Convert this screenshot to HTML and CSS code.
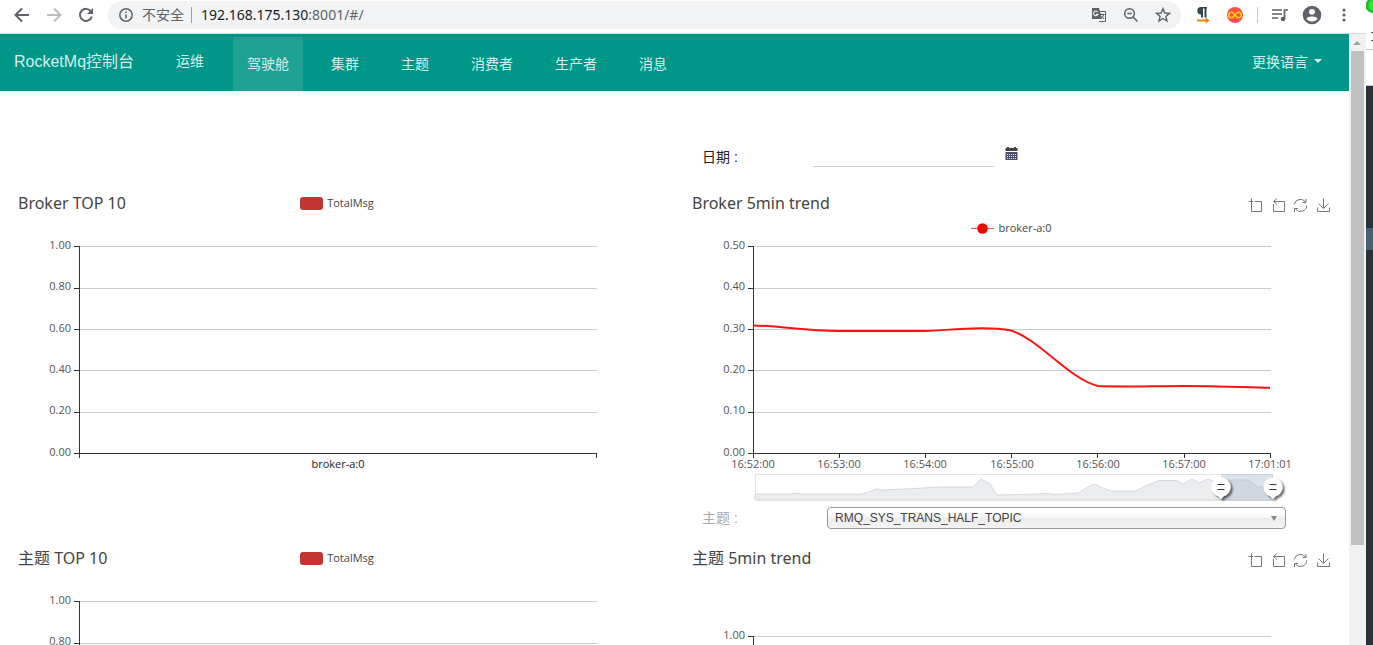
FILE: index.html
```html
<!DOCTYPE html>
<html lang="zh-CN">
<head>
<meta charset="utf-8">
<title>RocketMq控制台</title>
<link rel="stylesheet" href="styles.css">
</head>
<body>
<svg class="defs" aria-hidden="true">
  <defs>
    <g id="tools" fill="none" stroke="#777">
      <path d="M0.500 3.500H5M3.500 0.500V13.500H13.500V3.500H6.500"/>
      <path d="M25.500 6V13.500H36.500V3.500H26M29 0.500L25.500 3.500L29 6.500"/>
      <path d="M46.300 6.500A6.200 6.200 0 0 1 57.500 4M58.700 7.500A6.200 6.200 0 0 1 47.500 11M58 1V4.500H54.500M46.500 14V10.500H50"/>
      <path d="M75.500 0.500V10M70.500 5.500L75.500 10.500L80.500 5.500M69.500 9.500V13.500H81.500V9.500"/>
    </g>
    <g id="grid-lines" stroke="#ccc">
      <path d="M80 10.500H597M80 52.500H597M80 93.500H597M80 134.500H597M80 176.500H597"/>
    </g>
    <g id="axis-lines" stroke="#333">
      <path d="M79.500 10V222M74 217.500H597M74 10.500H79M74 52.500H79M74 93.500H79M74 134.500H79M74 176.500H79M596.500 218V222"/>
    </g>
    <filter id="handle-shadow" x="-50%" y="-50%" width="200%" height="200%">
      <feDropShadow dx="2" dy="2" stdDeviation="1" flood-color="#000" flood-opacity="0.6"/>
    </filter>
    <g id="handle">
      <path d="M0 12L-3 9A9.500 9.500 0 1 1 3 9Z" fill="#fff" filter="url(#handle-shadow)"/>
      <path d="M-3.500 -2.500H3.500M-3.500 2.500H3.500" stroke="#333"/>
    </g>
  </defs>
</svg>

<div class="browser">
  <header class="toolbar">
    <div class="nav-buttons">
      <button class="icon-btn" aria-label="后退"><svg width="16" height="16" viewBox="0 0 16 16" fill="none" stroke="#5f6368" stroke-width="2"><path d="M15 8H2.500M8 1.500L1.500 8L8 14.500"/></svg></button>
      <button class="icon-btn" aria-label="前进"><svg width="16" height="16" viewBox="0 0 16 16" fill="none" stroke="#babcbe" stroke-width="2"><path d="M1 8H13.500M8 1.500L14.500 8L8 14.500"/></svg></button>
      <button class="icon-btn" aria-label="重新加载"><svg width="16" height="16" viewBox="0 0 16 16"><path d="M13 4.500A6 6 0 1 0 13.800 9.500" fill="none" stroke="#5f6368" stroke-width="2"/><path d="M15 1V7H9Z" fill="#5f6368"/></svg></button>
    </div>
    <div class="omnibox">
      <svg width="16" height="16" viewBox="0 0 16 16" fill="none" stroke="#5f6368" stroke-width="1.500"><circle cx="8" cy="8" r="6.200"/><path d="M8 7.200V11.500M8 4.500V6"/></svg>
      <span class="insecure">不安全</span>
      <span class="url"><b>192.168.175.130</b>:8001/#/</span>
      <span class="spacer"></span>
      <button class="icon-btn" aria-label="翻译"><svg width="16" height="16" viewBox="0 0 16 16"><path d="M7 4.500H14.500V14.500H8" fill="none" stroke="#5f6368"/><path d="M1 1H8L11 12H1Z" fill="#5f6368"/><path d="M6.800 5A2.300 2.300 0 1 0 7 7.200H5" fill="none" stroke="#f1f3f4" stroke-width="1.100"/><path d="M9 7.500H13.500M11.200 6.500V7.500M12.800 7.500Q12 10 10.500 11.500M10.500 9L13 12" fill="none" stroke="#5f6368"/></svg></button>
      <button class="icon-btn" aria-label="缩放"><svg width="16" height="16" viewBox="0 0 16 16" fill="none" stroke="#5f6368" stroke-width="1.500"><circle cx="6.500" cy="6.500" r="4.800"/><path d="M10 10L14.500 14.500M4.300 6.500H8.700"/></svg></button>
      <button class="icon-btn" aria-label="收藏"><svg width="16" height="16" viewBox="0 0 16 16"><path d="M8 1.700L9.800 6L14.400 6.400L10.900 9.400L12 14L8 11.500L4 14L5.100 9.400L1.600 6.400L6.200 6Z" fill="none" stroke="#5f6368" stroke-width="1.400"/></svg></button>
    </div>
    <div class="extensions">
      <button class="icon-btn" aria-label="段落扩展"><svg width="16" height="18" viewBox="0 0 16 18"><path d="M12 1H6A3.700 3.700 0 0 0 6 8.400V11.500H8V2.500H9.500V11.500H11.500V2.500H12Z" fill="#37474f"/><path d="M2 14.500H12" stroke="#f57c00" stroke-width="2"/><path d="M10.500 11.500L14.500 14.500L10.500 17.500Z" fill="#f57c00"/></svg></button>
      <button class="icon-btn" aria-label="无限扩展"><svg width="18" height="18" viewBox="0 0 18 18"><circle cx="9" cy="9" r="8" fill="#ff4d4f"/><path d="M9 9C7.500 7 6.800 6.300 5.500 6.300A2.700 2.700 0 0 0 5.500 11.700C6.800 11.700 7.500 11 9 9S11.200 6.300 12.500 6.300A2.700 2.700 0 0 1 12.500 11.700C11.200 11.700 10.500 11 9 9Z" fill="none" stroke="#ffd600" stroke-width="1.500"/></svg></button>
      <span class="divider"></span>
      <button class="icon-btn" aria-label="媒体控制"><svg width="16" height="16" viewBox="0 0 16 16"><path d="M0 3H10M0 7H10M0 11H6M12.500 12V3H16" fill="none" stroke="#5f6368" stroke-width="1.700"/><circle cx="11" cy="12" r="2.300" fill="#5f6368"/></svg></button>
      <button class="icon-btn" aria-label="用户"><svg width="20" height="20" viewBox="0 0 20 20"><circle cx="10" cy="10" r="9.300" fill="#5f6368"/><circle cx="10" cy="6.800" r="2.900" fill="#fff"/><path d="M4.300 14C5.300 10.700 14.700 10.700 15.700 14Q10 19 4.300 14Z" fill="#fff"/></svg></button>
      <button class="icon-btn" aria-label="菜单"><svg width="16" height="16" viewBox="0 0 16 16" fill="#5f6368"><circle cx="8" cy="3" r="1.600"/><circle cx="8" cy="8" r="1.600"/><circle cx="8" cy="13" r="1.600"/></svg></button>
    </div>
  </header>

  <div class="viewport">
    <div class="page">
      <nav class="navbar">
        <a class="brand" href="#">RocketMq控制台</a>
        <a class="ops" href="#">运维</a>
        <div class="tabs">
          <a class="tab active" href="#">驾驶舱</a>
          <a class="tab" href="#">集群</a>
          <a class="tab" href="#">主题</a>
          <a class="tab" href="#">消费者</a>
          <a class="tab" href="#">生产者</a>
          <a class="tab" href="#">消息</a>
        </div>
        <button class="language">更换语言<span class="caret"></span></button>
      </nav>

      <main class="dashboard">
        <div class="column">
          <section class="chart top-row">
            <div class="chart-head">
              <h2>Broker TOP 10</h2>
              <div class="legend"><span class="swatch"></span>TotalMsg</div>
            </div>
            <svg class="plot" height="264" viewBox="0 0 674 264" preserveAspectRatio="xMinYMin meet">
              <use href="#grid-lines"/><use href="#axis-lines"/>
              <g class="y-labels"><text x="71" y="13">1.00</text><text x="71" y="54">0.80</text><text x="71" y="96">0.60</text><text x="71" y="137">0.40</text><text x="71" y="178">0.20</text><text x="71" y="220">0.00</text></g>
              <g class="x-labels dark"><text x="338" y="232">broker-a:0</text></g>
            </svg>
          </section>
          <section class="chart second">
            <div class="chart-head">
              <h2>主题 TOP 10</h2>
              <div class="legend"><span class="swatch"></span>TotalMsg</div>
            </div>
            <svg class="plot" height="264" viewBox="0 0 674 264" preserveAspectRatio="xMinYMin meet">
              <use href="#grid-lines"/><use href="#axis-lines"/>
              <g class="y-labels"><text x="71" y="13">1.00</text><text x="71" y="54">0.80</text></g>
            </svg>
          </section>
        </div>

        <div class="column">
          <form class="date-row">
            <label for="date">日期 :</label>
            <input id="date" type="text">
            <button type="button" class="calendar" aria-label="选择日期"><svg width="13" height="14" viewBox="0 0 13 14"><path d="M0.500 1H2V0H4V1H9V0H11V1H12.500V4H0.500Z" fill="#423f45"/><path d="M0.500 5H12.500V13H0.500Z" fill="#4c4f68"/><path d="M2 7.500H11M2 9.500H11M2 11.500H11" stroke="#d8dcea" stroke-dasharray="1 1"/></svg></button>
          </form>
          <section class="chart">
            <div class="chart-head">
              <h2>Broker 5min trend</h2>
              <svg class="toolbox" width="83" height="15" viewBox="0 0 83 15"><use href="#tools"/></svg>
            </div>
            <div class="legend trend-legend"><svg width="23" height="12" viewBox="0 0 23 12"><path d="M0 6.500H23" stroke="#ff5252"/><circle cx="11.500" cy="6.500" r="5.300" fill="#f00"/></svg>broker-a:0</div>
            <svg class="plot" height="269" viewBox="0 0 675 269" preserveAspectRatio="xMinYMin meet">
              <use href="#grid-lines"/><use href="#axis-lines"/>
              <path d="M165.500 218V222M251.500 218V222M337.500 218V222M423.500 218V222M510.500 218V222" stroke="#333"/>
              <path d="M79 89.500C108 90 130 95 165 95C195 95.200 220 95 251 95C280 93.800 313 90 337 94.500C365 103 395 143 424 150C450 151 480 150 510 150C540 150 570 151 596 151.800" fill="none" stroke="#f11" stroke-width="2"/>
              <g class="y-labels"><text x="71" y="13">0.50</text><text x="71" y="54">0.40</text><text x="71" y="96">0.30</text><text x="71" y="137">0.20</text><text x="71" y="178">0.10</text><text x="71" y="220">0.00</text></g>
              <g class="x-labels"><text x="79" y="232">16:52:00</text><text x="165" y="232">16:53:00</text><text x="251" y="232">16:54:00</text><text x="338" y="232">16:55:00</text><text x="424" y="232">16:56:00</text><text x="510" y="232">16:57:00</text><text x="596" y="232">17:01:01</text></g>
              <path d="M81 258H116L121 257L129 258H187L195 256L202 253L211 254L231 253L267 251H299L307 243L316 248L323 259L364 258L371 257.500L382 258.500L405 257L412 252L420 248L429 252L437 255H462L469 251L485 244.500H502L509 248L518 243L525 247L534 243L542 246L547 244H574L584 251H599V264H81Z" fill="#ebedef" stroke="#d5dadf"/>
              <rect x="81.500" y="238.500" width="517" height="26" fill="none" stroke="#e2e2e2"/>
              <rect x="547" y="238" width="52" height="27" fill="#a7b7cc" fill-opacity="0.4"/>
              <use href="#handle" x="547" y="251"/><use href="#handle" x="599" y="251"/>
            </svg>
          </section>
          <form class="topic-row">
            <label for="topic">主题 :</label>
            <div class="select-wrap">
              <select id="topic"><option>RMQ_SYS_TRANS_HALF_TOPIC</option></select>
              <span class="select-arrow"></span>
            </div>
          </form>
          <section class="chart">
            <div class="chart-head">
              <h2>主题 5min trend</h2>
              <svg class="toolbox" width="83" height="15" viewBox="0 0 83 15"><use href="#tools"/></svg>
            </div>
            <svg class="plot lower" height="264" viewBox="0 0 675 264" preserveAspectRatio="xMinYMin meet">
              <use href="#grid-lines"/><use href="#axis-lines"/>
              <g class="y-labels"><text x="71" y="13">1.00</text></g>
            </svg>
          </section>
        </div>
      </main>
    </div>
    <div class="scrollbar">
      <span class="scroll-up"></span>
      <span class="thumb"></span>
      <span class="track-rest"></span>
    </div>
  </div>
</div>
<aside class="behind">
  <div class="behind-top"><svg width="7" height="49" viewBox="0 0 7 49"><circle cx="7" cy="5.500" r="7.500" fill="#1fbf2b"/><circle cx="8" cy="5.500" r="5.500" fill="#39e043"/><path d="M5 32.500H7M5 40.500H7" stroke="#6b5540"/></svg></div>
  <div class="behind-tab"></div>
  <div class="behind-dark"></div>
  <div class="behind-selected"></div>
  <div class="behind-rest"></div>
</aside>
</body>
</html>
```

FILE: styles.css
```css
* { box-sizing: border-box; }

body {
  margin: 0;
  height: 100vh;
  display: flex;
  overflow: hidden;
  background: #fff;
  color: #333;
  font-family: "Liberation Sans", "Noto Sans CJK SC", sans-serif;
  font-size: 14px;
}

button { border: 0; padding: 0; background: none; font: inherit; color: inherit; }
a { color: inherit; text-decoration: none; }
.defs { position: absolute; width: 0; height: 0; }

/* Browser toolbar */
.browser { flex: 1; min-width: 0; display: flex; flex-direction: column; }
.toolbar {
  display: flex;
  align-items: center;
  height: 34px;
  padding: 0 6px 4px;
  border-bottom: 1px solid #d8dadc;
}
.nav-buttons { display: flex; margin-right: 6px; }
.icon-btn { display: flex; align-items: center; justify-content: center; width: 32px; height: 28px; }
.omnibox {
  flex: 1;
  display: flex;
  align-items: center;
  height: 28px;
  padding: 0 2px 0 10px;
  border-radius: 14px;
  background: #f1f3f4;
  font-family: "Noto Sans", "Noto Sans CJK SC", sans-serif;
  color: #5f6368;
}
.insecure { margin-left: 8px; line-height: 16px; }
.url { margin-left: 7px; padding-left: 9px; border-left: 1px solid #9aa0a6; line-height: 16px; }
.url b { font-weight: 400; color: #202124; }
.spacer { flex: 1; }
.extensions { display: flex; align-items: center; margin-left: 6px; }
.divider { width: 1px; height: 16px; margin: 0 6px; background: #c8cacd; }

/* Page area */
.viewport { flex: 1; min-height: 0; display: flex; }
.page { flex: 1; min-width: 0; overflow: hidden; }

.navbar {
  display: flex;
  height: 57px;
  padding: 0 27px 0 14px;
  background: #009688;
  color: #d6eeeb;
}
.brand { font-size: 16px; line-height: 56px; }
.ops { margin-left: 42px; line-height: 54px; }
.tabs { display: flex; gap: 14px; margin: 3px 0 0 29px; }
.tab { padding: 0 14px; line-height: 54px; }
.tab.active { background: #1fa193; }
.language { display: flex; align-items: center; gap: 6px; height: 54px; margin-left: auto; }
.caret { border: 4px solid transparent; border-top-color: #d6eeeb; border-bottom: 0; }

.dashboard { display: grid; grid-template-columns: 674fr 675fr; }
.column { min-width: 0; }

.date-row { display: flex; height: 94px; padding: 44px 0 0 28px; }
.date-row label { width: 111px; line-height: 44px; color: #212121; }
.date-row input {
  width: 181px;
  height: 32px;
  border: 0;
  border-bottom: 1px solid #d2d2d2;
  background: none;
}
.calendar { width: 13px; height: 14px; margin: 12px 0 0 11px; line-height: 0; }

/* Charts */
.chart { font-family: "Open Sans", "Noto Sans CJK SC", sans-serif; }
.top-row { margin-top: 94px; }
.second { margin-top: 40px; }
.chart-head {
  display: grid;
  grid-template-columns: 1fr auto 1fr;
  align-items: center;
  height: 36px;
  padding: 0 18px;
}
.chart-head h2 {
  margin: 0;
  font: 400 16px/24px "Noto Sans", "Noto Sans CJK SC", sans-serif;
  color: #444;
  white-space: nowrap;
}
.legend { display: flex; align-items: center; gap: 4px; font-size: 11px; line-height: 14px; color: #444; }
.swatch { width: 23px; height: 13px; border-radius: 3px; background: #c23531; }
.toolbox { grid-column: 3; justify-self: end; margin-top: 5px; }
.trend-legend { justify-content: center; height: 14px; margin-bottom: 1px; }
.plot { display: block; width: 100%; font-size: 11px; fill: #555; }
.column:first-child .plot { margin-top: 15px; }
.plot.lower { margin-top: 50px; }
.y-labels { text-anchor: end; }
.x-labels { text-anchor: middle; }
.x-labels.dark { fill: #222; }

.topic-row { display: flex; height: 35px; padding: 2px 63px 0 28px; }
.topic-row label { width: 125px; line-height: 22px; color: #aaa; }
.select-wrap { position: relative; flex: 1; height: 22px; }
.select-wrap select {
  appearance: none;
  display: block;
  width: 100%;
  height: 22px;
  padding: 0 7px;
  border: 1px solid #999;
  border-radius: 4px;
  background: linear-gradient(#fff 20%, #f4f4f4 50%, #ececec 52%, #f3f3f3);
  color: #444;
  font: 12px "Liberation Sans", sans-serif;
}
.select-arrow {
  position: absolute;
  top: 9px;
  right: 9px;
  border: 3px solid transparent;
  border-top: 5px solid #888;
  border-bottom: 0;
  pointer-events: none;
}

/* Scrollbar */
.scrollbar {
  display: flex;
  flex-direction: column;
  width: 17px;
  padding: 0 2px;
  background: #f1f1f1;
}
.scroll-up { height: 17px; padding: 7px 2px; }
.scroll-up::before { content: ""; display: block; width: 0; border: 4px solid transparent; border-bottom-color: #a3a3a3; border-top: 0; }
.thumb { flex: 494; background: #c1c1c1; }
.track-rest { flex: 100; }

/* Window behind the browser */
.behind { display: flex; flex-direction: column; width: 7px; }
.behind-top { height: 50px; border-bottom: 1px solid #c8c8c8; line-height: 0; }
.behind-tab { height: 36px; border-bottom: 1px solid #c8c8c8; }
.behind-dark { height: 142px; background: #29323c; }
.behind-selected { height: 22px; background: #4a5f6e; }
.behind-rest { flex: 1; background: #29323c; }
```
